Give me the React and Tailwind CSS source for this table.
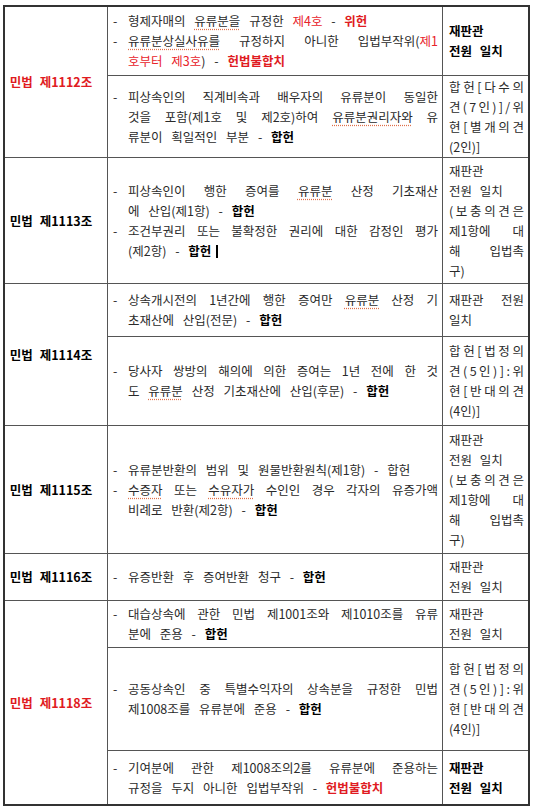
import React from "react";

const FONT = { fontFamily: '"Noto Sans CJK KR", "Noto Sans", sans-serif' };

// 줄 하나 (j: 양쪽 정렬, i: 들여쓰기, d: 앞에 "-" 붙임)
function L({ j, i, d, children }) {
  return (
    <div
      className={`${j ? "text-justify [text-align-last:justify] [word-spacing:0px]" : "[word-spacing:6px]"} ${
        i ? "pl-[16px]" : ""
      }`}
    >
      {d && <span className="inline-block w-[16px] pl-[1px]">-</span>}
      {children}
    </div>
  );
}

// 글자 단위로 벌린 줄 (오른쪽 칸)
function Sp({ text }) {
  const parts = text.includes(" ") ? text.split(" ") : [...text];
  return (
    <div className="flex justify-between">
      {parts.map((c, k) => (
        <span key={k}>{c}</span>
      ))}
    </div>
  );
}

const U = ({ children }) => (
  <span className="underline decoration-dotted decoration-[#e0704a] underline-offset-[3px]">{children}</span>
);
const R = ({ children }) => <span className="text-[#e8232b]">{children}</span>;
const RB = ({ children }) => <span className="text-[#e01b22] font-bold">{children}</span>;
const B = ({ children }) => <span className="font-bold text-black">{children}</span>;

function Sub({ h, last, mid, right }) {
  return (
    <div className={`flex ${h || "flex-1"} ${last ? "" : "border-b border-[#555]"}`}>
      <div className="flex-1 pl-[4px] pr-[4px] flex flex-col justify-center">{mid}</div>
      <div className="w-[86px] border-l border-[#555] pl-[6px] pr-[4px] flex flex-col justify-center [word-spacing:5px]">
        {right}
      </div>
    </div>
  );
}

function Group({ h, label, red, last, children }) {
  return (
    <div className={`flex ${h} ${last ? "" : "border-b border-[#555]"}`}>
      <div
        className={`w-[103px] border-r border-[#555] flex items-center justify-center pr-[10px] font-bold text-[12.5px] [word-spacing:4px] ${
          red ? "text-[#e01b22]" : "text-black"
        }`}
      >
        {label}
      </div>
      <div className="flex-1 flex flex-col">{children}</div>
    </div>
  );
}

const Unanimous = ({ bold }) => (
  <div className={bold ? "font-bold text-black" : ""}>
    <div>재판관</div>
    <div>전원 일치</div>
  </div>
);

const Concur = () => (
  <>
    <div>재판관</div>
    <div>전원 일치</div>
    <Sp text="(보충의견은" />
    <Sp text="제1항에 대" />
    <Sp text="해 입법촉" />
    <div>구)</div>
  </>
);

const Split54 = () => (
  <>
    <Sp text="합헌[법정의" />
    <Sp text="견(5인)]:위" />
    <Sp text="현[반대의견" />
    <div>(4인)]</div>
  </>
);

export default function App() {
  return (
    <div className="w-[533px] h-[808px] bg-white overflow-hidden pt-[5px] pl-[3px]" style={FONT}>
      <div className="w-[527px] border-2 border-[#333] text-[12.5px] leading-[20px] text-[#2a2a2a]">
        {/* 제1112조 */}
        <Group h="h-[151px]" label="민법 제1112조" red>
          <Sub
            h="h-[69px]"
            mid={
              <>
                <L d>
                  형제자매의 <U>유류분을</U> 규정한 <R>제4호</R> - <RB>위헌</RB>
                </L>
                <L j d>
                  <U>유류분상실사유를</U> 규정하지 아니한 입법부작위(<R>제1</R>
                </L>
                <L i>
                  <R>호부터 제3호</R>) - <RB>헌법불합치</RB>
                </L>
              </>
            }
            right={<Unanimous bold />}
          />
          <Sub
            last
            mid={
              <>
                <L j d>피상속인의 직계비속과 배우자의 유류분이 동일한</L>
                <L j i>
                  것을 포함(제1호 및 제2호)하여 <U>유류분권리자와</U> 유
                </L>
                <L i>
                  류분이 획일적인 부분 - <B>합헌</B>
                </L>
              </>
            }
            right={
              <>
                <Sp text="합헌[다수의" />
                <Sp text="견(7인)]/위" />
                <Sp text="현[별개의견" />
                <div>(2인)]</div>
              </>
            }
          />
        </Group>

        {/* 제1113조 */}
        <Group h="h-[126px]" label="민법 제1113조">
          <Sub
            last
            mid={
              <>
                <L j d>
                  피상속인이 행한 증여를 <U>유류분</U> 산정 기초재산
                </L>
                <L i>
                  에 산입(제1항) - <B>합헌</B>
                </L>
                <L j d>조건부권리 또는 불확정한 권리에 대한 감정인 평가</L>
                <L i>
                  (제2항) - <B>합헌</B>
                  <span className="inline-block w-[2px] h-[13px] bg-black ml-[5px] align-[-2px]" />
                </L>
              </>
            }
            right={<Concur />}
          />
        </Group>

        {/* 제1114조 */}
        <Group h="h-[142px]" label="민법 제1114조">
          <Sub
            h="h-[53px]"
            mid={
              <>
                <L j d>
                  상속개시전의 1년간에 행한 증여만 <U>유류분</U> 산정 기
                </L>
                <L i>
                  초재산에 산입(전문) - <B>합헌</B>
                </L>
              </>
            }
            right={
              <>
                <Sp text="재판관 전원" />
                <div>일치</div>
              </>
            }
          />
          <Sub
            last
            mid={
              <>
                <L j d>당사자 쌍방의 해의에 의한 증여는 1년 전에 한 것</L>
                <L i>
                  도 <U>유류분</U> 산정 기초재산에 산입(후문) - <B>합헌</B>
                </L>
              </>
            }
            right={<Split54 />}
          />
        </Group>

        {/* 제1115조 */}
        <Group h="h-[128px]" label="민법 제1115조">
          <Sub
            last
            mid={
              <>
                <L d>유류분반환의 범위 및 원물반환원칙(제1항) - 합헌</L>
                <L j d>
                  <U>수증자</U> 또는 <U>수유자가</U> 수인인 경우 각자의 유증가액
                </L>
                <L i>
                  비례로 반환(제2항) - <B>합헌</B>
                </L>
              </>
            }
            right={<Concur />}
          />
        </Group>

        {/* 제1116조 */}
        <Group h="h-[47px]" label="민법 제1116조">
          <Sub
            last
            mid={
              <L d>
                유증반환 후 증여반환 청구 - <B>합헌</B>
              </L>
            }
            right={<Unanimous />}
          />
        </Group>

        {/* 제1118조 */}
        <Group h="h-[203px]" label="민법 제1118조" red last>
          <Sub
            h="h-[47px]"
            mid={
              <>
                <L j d>대습상속에 관한 민법 제1001조와 제1010조를 유류</L>
                <L i>
                  분에 준용 - <B>합헌</B>
                </L>
              </>
            }
            right={<Unanimous />}
          />
          <Sub
            h="h-[103px]"
            mid={
              <>
                <L j d>공동상속인 중 특별수익자의 상속분을 규정한 민법</L>
                <L i>
                  제1008조를 유류분에 준용 - <B>합헌</B>
                </L>
              </>
            }
            right={<Split54 />}
          />
          <Sub
            last
            mid={
              <>
                <L j d>기여분에 관한 제1008조의2를 유류분에 준용하는</L>
                <L i>
                  규정을 두지 아니한 입법부작위 - <RB>헌법불합치</RB>
                </L>
              </>
            }
            right={<Unanimous bold />}
          />
        </Group>
      </div>
    </div>
  );
}
